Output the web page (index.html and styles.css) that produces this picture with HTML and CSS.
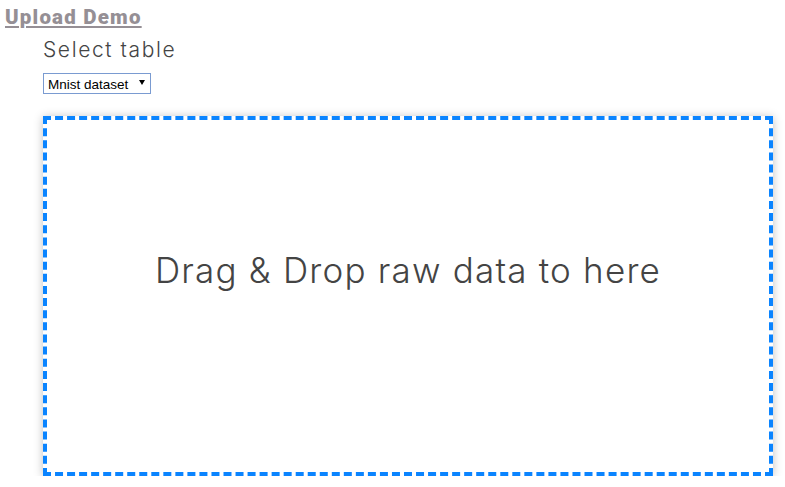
FILE: index.html
```html
<!DOCTYPE html>
<html>
<head>
<meta charset="utf-8">
<link rel="stylesheet" href="styles.css">
</head>
<body>
<a class="title" href="#">Upload Demo</a>
<div class="content">
  <div class="label">Select table</div>
  <div class="picker-wrap">
    <select class="picker">
      <option>Mnist dataset</option>
    </select>
    <span class="picker-arrow"></span>
  </div>
  <div class="dropzone">
    <span class="drop-text">Drag &amp; Drop raw data to here</span>
  </div>
</div>
</body>
</html>
```
FILE: styles.css
```css
html, body {
  margin: 0;
  padding: 0;
  background: #fff;
}
body {
  font-family: Inter, "Liberation Sans", sans-serif;
}
.title {
  display: block;
  margin: 5px 0 0 5px;
  font-family: Roboto, "Liberation Sans", sans-serif;
  font-weight: 900;
  font-size: 20.5px;
  line-height: 24px;
  letter-spacing: 1.2px;
  color: #958f95;
  text-decoration: underline;
  width: max-content;
}
.content {
  padding-left: 43px;
  display: flex;
  flex-direction: column;
  align-items: flex-start;
}
.label {
  font-family: Inter, sans-serif;
  font-weight: 300;
  font-size: 21px;
  line-height: 28px;
  letter-spacing: 1.6px;
  margin-top: 7px;
  color: #444;
}
.picker-wrap {
  position: relative;
  margin-top: 9px;
}
.picker {
  display: block;
  appearance: none;
  -webkit-appearance: none;
  height: 21px;
  width: 108px;
  font-family: "Liberation Sans", Arial, sans-serif;
  font-size: 13.5px;
  border: 1px solid #7a9bd1;
  border-radius: 0;
  background: #fff;
  padding: 1px 4px 0;
  color: #000;
}
.picker-arrow {
  position: absolute;
  left: 96px;
  top: 7px;
  width: 0;
  height: 0;
  border-left: 3px solid transparent;
  border-right: 3px solid transparent;
  border-top: 5px solid #000;
  pointer-events: none;
}
.dropzone {
  margin-top: 22px;
  box-sizing: border-box;
  width: 730px;
  height: 360px;
  border: 4px dashed #0a84ff;
  box-shadow: 0 1px 9px rgba(0,0,0,0.25);
  display: flex;
  align-items: center;
  justify-content: center;
  padding-bottom: 52px;
}
.drop-text {
  font-family: Inter, sans-serif;
  font-weight: 300;
  font-size: 35px;
  letter-spacing: 1.2px;
  color: #444;
}
```
